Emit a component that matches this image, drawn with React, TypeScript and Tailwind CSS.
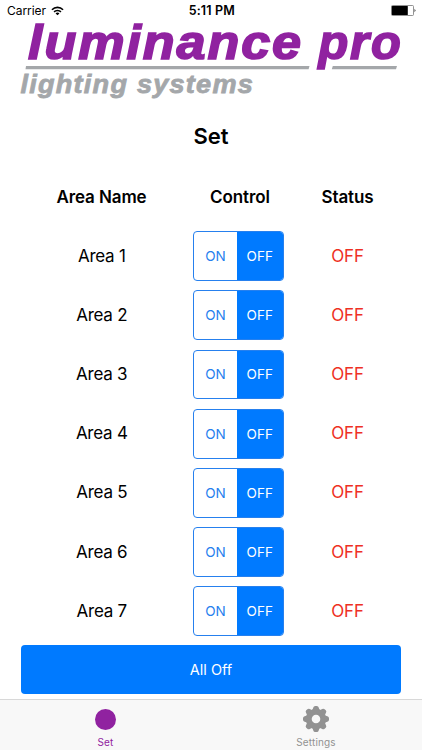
const areas = ['Area 1', 'Area 2', 'Area 3', 'Area 4', 'Area 5', 'Area 6', 'Area 7'];

function StatusBar() {
  return (
    <div className="flex h-[22px] items-center justify-between pr-[5.5px] pl-[7px]">
      <div className="flex w-[120px] items-center gap-[5px]">
        <span className="text-[12px] leading-none tracking-[-0.05px]">Carrier</span>
        <svg width="13" height="10" viewBox="0 0 14 10" fill="none" stroke="#000" strokeWidth="1.7">
          <path d="M1 3.6a8.4 8.4 0 0 1 12 0" />
          <path d="M3.3 6a5.2 5.2 0 0 1 7.4 0" />
          <path d="M7 9.7 4.9 7.6a3 3 0 0 1 4.2 0z" fill="#000" stroke="none" />
        </svg>
      </div>
      <span className="text-[12.5px] leading-none font-semibold tracking-[0.15px]">5:11 PM</span>
      <div className="flex w-[120px] justify-end">
        <svg className="-mt-px" width="25.5" height="11" viewBox="0 0 25.5 11">
          <rect x="0.5" y="0.5" width="22" height="10" rx="1" fill="#fff" stroke="#777" strokeWidth="0.8" />
          <rect x="0.9" y="1" width="15.9" height="9" rx="0.5" fill="#000" />
          <path d="M23.6 3.8q1.8 1.7 0 3.4z" fill="#000" />
        </svg>
      </div>
    </div>
  );
}

function Logo() {
  return (
    <svg
      className="block overflow-visible"
      width="422"
      height="80"
      viewBox="0 22 422 80"
      fontFamily="'Liberation Sans', Arial, sans-serif"
      fontWeight="700"
      fontStyle="italic"
    >
      <path d="M26 65.9H309.5L308.6 69.2H25.5zM332.8 65.9H397L396 69.2H331.8z" fill="#a4a7aa" />
      <g fontSize="49" fill="#9022a0" stroke="#9022a0" strokeWidth="1.7" letterSpacing="1.8">
        <text x="28" y="58.7" textLength="275" lengthAdjust="spacingAndGlyphs">
          luminance
        </text>
        <text x="318.5" y="58.7" textLength="84" lengthAdjust="spacingAndGlyphs">
          pro
        </text>
      </g>
      <text
        x="20.5"
        y="92.8"
        fontSize="26"
        textLength="233.5"
        lengthAdjust="spacingAndGlyphs"
        letterSpacing="1.2"
        fill="#a4a7aa"
        stroke="#a4a7aa"
        strokeWidth="0.8"
      >
        lighting systems
      </text>
    </svg>
  );
}

function GearIcon() {
  return (
    <svg width="26" height="26" viewBox="-13 -13 26 26" fill="#929292">
      <circle r="7.1" fill="none" stroke="#929292" strokeWidth="5.6" />
      {[0, 45, 90, 135, 180, 225, 270, 315].map((angle) => (
        <path
          key={angle}
          transform={`rotate(${angle})`}
          d="M-4.4 -8.4Q-2.9 -9.8 -2.7 -11.4Q-2.3 -13 -0.8 -13H0.8Q2.3 -13 2.7 -11.4Q2.9 -9.8 4.4 -8.4z"
        />
      ))}
    </svg>
  );
}

function AreaRow({ name }: { name: string }) {
  return (
    <div className="grid h-[49.8px] grid-cols-[162px_90.5px_128px] items-center text-center">
      <span className="pr-[20.5px] text-[17px] leading-none tracking-[-0.25px]">{name}</span>
      <div className="flex h-full overflow-hidden rounded-[4px] border border-[#2680ee] text-[13.5px]">
        <span className="flex w-[43px] items-center justify-center text-[#2680ee]">ON</span>
        <span className="flex flex-1 items-center justify-center bg-[#007aff] text-white">OFF</span>
      </div>
      <span className="text-[17px] leading-none tracking-[-0.2px] text-[#ee3024]">OFF</span>
    </div>
  );
}

export default function App() {
  return (
    <div className="flex h-[750px] w-[422px] flex-col overflow-hidden bg-white font-['Inter',sans-serif] text-black">
      <StatusBar />
      <Logo />
      <h1 className="mt-[19px] text-center text-[22px] leading-[30px] font-semibold">Set</h1>
      <main className="flex flex-col px-[21px]">
        <div className="mt-[34px] ml-[9px] grid h-[20px] grid-cols-[143px_134px_81px] items-center text-center text-[17px] font-semibold tracking-[-0.1px]">
          <span>Area Name</span>
          <span>Control</span>
          <span>Status</span>
        </div>
        <div className="mt-[26.2px] flex flex-col gap-[9.4px] pl-[10px]">
          {areas.map((name) => (
            <AreaRow key={name} name={name} />
          ))}
        </div>
        <button className="mt-[9.2px] flex h-[49px] w-full items-center justify-center rounded-[4px] bg-[#007aff] text-[14.5px] text-white">
          All Off
        </button>
      </main>
      <nav className="mt-auto grid h-[51px] grid-cols-2 border-t border-[#d8d8d8] bg-[#f8f8f8] text-[10px] leading-none tracking-[0.15px]">
        <div className="flex flex-col items-center text-[#9022a0]">
          <span className="mt-[9px] size-[21px] rounded-full bg-[#9022a0]" />
          <span className="mt-[7px]">Set</span>
        </div>
        <div className="flex flex-col items-center pr-px text-[#929292]">
          <span className="mt-[6px] h-[26px]">
            <GearIcon />
          </span>
          <span className="mt-[5px]">Settings</span>
        </div>
      </nav>
    </div>
  );
}
